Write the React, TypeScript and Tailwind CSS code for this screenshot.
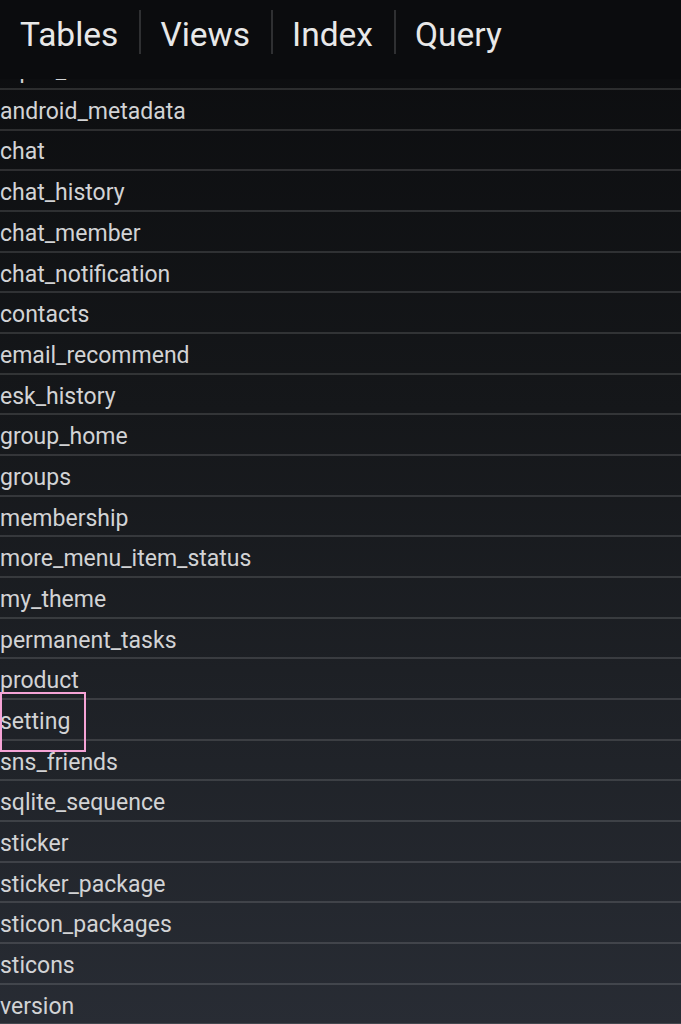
import React from "react";

const rows = [
  "sqlite_master",
  "android_metadata",
  "chat",
  "chat_history",
  "chat_member",
  "chat_notification",
  "contacts",
  "email_recommend",
  "esk_history",
  "group_home",
  "groups",
  "membership",
  "more_menu_item_status",
  "my_theme",
  "permanent_tasks",
  "product",
  "setting",
  "sns_friends",
  "sqlite_sequence",
  "sticker",
  "sticker_package",
  "sticon_packages",
  "sticons",
  "version",
];

const tabs = ["Tables", "Views", "Index", "Query"];

export default function App() {
  return (
    <div
      className="relative w-[681px] h-[1024px] overflow-hidden bg-[linear-gradient(180deg,#0b0c0e_0%,#15171a_40%,#282c34_100%)]"
      style={{ fontFamily: "Roboto, 'Liberation Sans', sans-serif" }}
    >
      <div className="h-[78.5px] bg-[#0b0c0e] relative z-10">
        <div className="flex items-center pt-[10px] h-[54px] pl-[20px]">
          {tabs.map((t, i) => (
            <React.Fragment key={t}>
              {i > 0 && <div className="w-[2px] h-[44px] bg-[#2f3032] ml-[21px] mr-[19px]" />}
              <div className="pt-[5px] text-[33.5px] leading-[44px] text-[#e8e8e8]">{t}</div>
            </React.Fragment>
          ))}
        </div>
      </div>
      <div className="mt-[-29.2px]">
        {rows.map((r) => (
          <div
            key={r}
            className="h-[40.68px] border-b-2 border-[rgba(255,255,255,0.13)] flex items-center text-[23px] text-[#d2d3d5] leading-none"
          >
            <span className="pt-[4px]">{r}</span>
          </div>
        ))}
      </div>
      <div className="absolute left-0 top-[692px] w-[86px] h-[60px] border-2 border-[#f5a3d6]" />
    </div>
  );
}
